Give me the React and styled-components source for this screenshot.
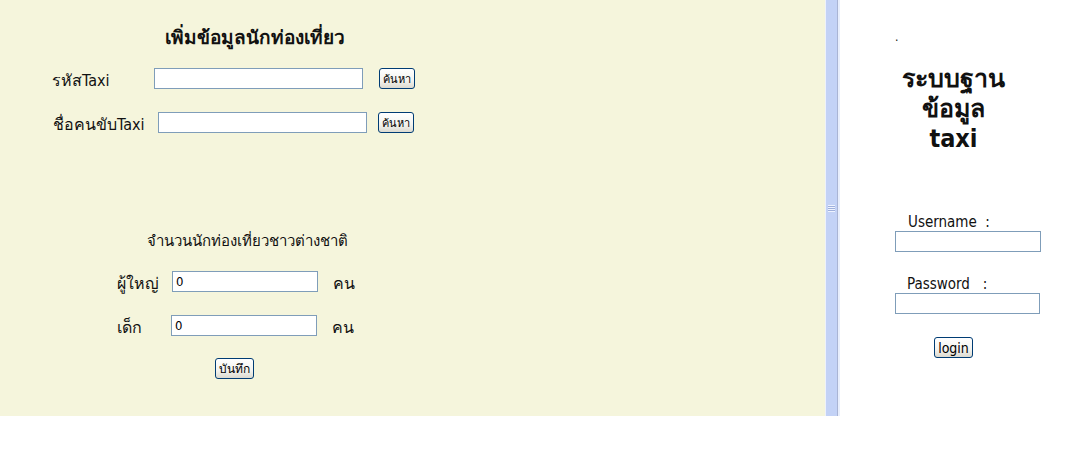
import React from "react";
import styled, { createGlobalStyle } from "styled-components";

const Global = createGlobalStyle`
  html, body { margin: 0; padding: 0; background: #ffffff; }
  body { font-family: "DejaVu Sans Condensed", "DejaVu Sans", "Noto Sans", sans-serif; color: #111; }
`;

const Frame = styled.div`
  display: flex;
  width: 1068px;
  height: 416px;
`;

const LeftPane = styled.div`
  width: 825px;
  background: #f5f5dc;
  box-sizing: border-box;
  padding-top: 24px;
`;

const Splitter = styled.div`
  width: 15px;
  display: flex;
  align-items: center;
  justify-content: center;
  background: linear-gradient(to right, #eef1fb 0, #eef1fb 1px, #c3d2f6 1px, #c3d2f6 12px, #a9b4d4 12px, #a9b4d4 13px, #e8eefc 13px);
`;

const Grip = styled.div`
  width: 7px;
  height: 7px;
  margin-left: -2px;
  background: repeating-linear-gradient(to bottom, #eef3ff 0 1px, #9fb0dc 1px 2px);
`;

const RightPane = styled.div`
  flex: 1;
  background: #ffffff;
  display: flex;
  flex-direction: column;
  align-items: flex-start;
  padding-left: 55px;
  padding-top: 31px;
  box-sizing: border-box;
`;

const Title = styled.div`
  width: 510px;
  text-align: center;
  font-weight: bold;
  font-size: 19px;
  height: 27px;
  line-height: 27px;
`;

const Row = styled.div`
  display: flex;
  align-items: center;
  height: 21px;
  margin-top: ${(p) => p.$mt || 0}px;
  padding-left: ${(p) => p.$pl || 0}px;
`;

const Label = styled.span`
  width: ${(p) => p.$w}px;
  font-size: 16px;
  white-space: nowrap;
  padding-top: 3px;
`;

const TextInput = styled.input`
  box-sizing: border-box;
  width: ${(p) => p.$w}px;
  height: 21px;
  border: 1px solid #7f9db9;
  background: #fff;
  padding: 0 3px;
  font-family: "DejaVu Sans Condensed", "DejaVu Sans", sans-serif;
  font-size: 13px;
  color: #000;
  outline: none;
  margin: 0;
`;

const Button = styled.button`
  box-sizing: border-box;
  height: ${(p) => p.$h || 21}px;
  padding: 0 ${(p) => p.$px || 3}px;
  margin-left: ${(p) => p.$ml || 0}px;
  border: 1px solid #003c74;
  border-radius: 3px;
  background: linear-gradient(to bottom, #ffffff 0%, #f3f3ef 60%, #dcdad0 100%);
  font-family: "DejaVu Sans Condensed", "DejaVu Sans", sans-serif;
  font-size: ${(p) => p.$fs || 11}px;
  color: #000;
  cursor: pointer;
  display: inline-flex;
  align-items: center;
  justify-content: center;
`;

const Unit = styled.span`
  margin-left: ${(p) => p.$ml}px;
  font-size: 16px;
  padding-top: 3px;
`;

const SubTitle = styled.div`
  margin-top: ${(p) => p.$mt}px;
  padding-left: 147px;
  font-size: 15px;
  height: 20px;
  line-height: 20px;
`;

const Dot = styled.div`
  font-size: 12px;
  line-height: 12px;
  height: 14px;
`;

const SystemTitle = styled.div`
  width: 117px;
  margin-top: 19px;
  text-align: center;
  font-weight: bold;
  font-size: 25px;
  line-height: 30px;
`;

const FieldLabel = styled.div`
  margin-top: ${(p) => p.$mt}px;
  padding-left: ${(p) => p.$pl}px;
  font-family: "DejaVu Sans Condensed", "DejaVu Sans", sans-serif;
  font-size: 15px;
  height: 18px;
  line-height: 18px;
  white-space: pre;
`;

const Centered = styled.div`
  width: 117px;
  display: flex;
  justify-content: center;
  margin-top: ${(p) => p.$mt}px;
`;

export default function App() {
  return (
    <>
      <Global />
      <Frame>
        <LeftPane>
          <Title>เพิ่มข้อมูลนักท่องเที่ยว</Title>
          <Row $mt={17} $pl={52}>
            <Label $w={102}>รหัสTaxi</Label>
            <TextInput $w={209} />
            <Button $ml={16}>ค้นหา</Button>
          </Row>
          <Row $mt={23} $pl={53}>
            <Label $w={105}>ชื่อคนขับTaxi</Label>
            <TextInput $w={209} />
            <Button $ml={11}>ค้นหา</Button>
          </Row>
          <SubTitle $mt={98}>จำนวนนักท่องเที่ยวชาวต่างชาติ</SubTitle>
          <Row $mt={20} $pl={117}>
            <Label $w={55}>ผู้ใหญ่</Label>
            <TextInput $w={146} defaultValue="0" />
            <Unit $ml={15}>คน</Unit>
          </Row>
          <Row $mt={23} $pl={117}>
            <Label $w={54}>เด็ก</Label>
            <TextInput $w={146} defaultValue="0" />
            <Unit $ml={15}>คน</Unit>
          </Row>
          <Row $mt={22} $pl={215}>
            <Button $fs={12}>บันทึก</Button>
          </Row>
        </LeftPane>
        <Splitter>
          <Grip />
        </Splitter>
        <RightPane>
          <Dot>.</Dot>
          <SystemTitle>
            ระบบฐาน
            <br />
            ข้อมูล
            <br />
            taxi
          </SystemTitle>
          <FieldLabel $mt={59} $pl={13}>{"Username  :"}</FieldLabel>
          <TextInput $w={146} />
          <FieldLabel $mt={23} $pl={12}>{"Password   :"}</FieldLabel>
          <TextInput $w={145} />
          <Centered $mt={23}>
            <Button $fs={14} $h={21} $px={3}>login</Button>
          </Centered>
        </RightPane>
      </Frame>
    </>
  );
}
